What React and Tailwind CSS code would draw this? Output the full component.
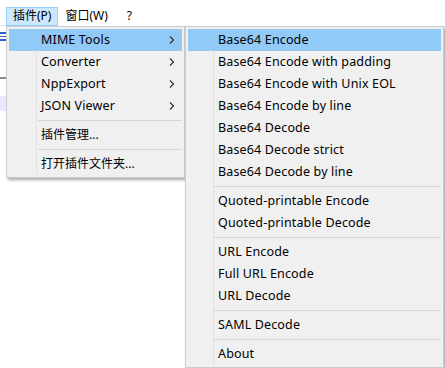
import React from "react";

const font = { fontFamily: '"Segoe UI", "Noto Sans", "Noto Sans CJK SC", sans-serif' };

const mainItems = [
  { label: "MIME Tools", sub: true, active: true },
  { label: "Converter", sub: true },
  { label: "NppExport", sub: true },
  { label: "JSON Viewer", sub: true },
  "sep",
  { label: "插件管理...", cjk: true },
  "sep",
  { label: "打开插件文件夹...", cjk: true },
];

const subItems = [
  { label: "Base64 Encode", active: true },
  { label: "Base64 Encode with padding" },
  { label: "Base64 Encode with Unix EOL" },
  { label: "Base64 Encode by line" },
  { label: "Base64 Decode" },
  { label: "Base64 Decode strict" },
  { label: "Base64 Decode by line" },
  "sep",
  { label: "Quoted-printable Encode" },
  { label: "Quoted-printable Decode" },
  "sep",
  { label: "URL Encode" },
  { label: "Full URL Encode" },
  { label: "URL Decode" },
  "sep",
  { label: "SAML Decode" },
  "sep",
  { label: "About" },
];

function Chevron() {
  return (
    <svg width="6" height="8" viewBox="0 0 6 8" className="shrink-0">
      <path d="M1 0.5 L4.5 4 L1 7.5" fill="none" stroke="#333" strokeWidth="1.2" />
    </svg>
  );
}

function Menu({ items, gutter, sepLeft, textLeft, className }) {
  return (
    <div
      className={`absolute bg-[#f0f0f0] border border-[#cccccc] p-[2px] shadow-[2px_2px_3px_rgba(0,0,0,0.35)] ${className}`}
    >
      <div className="relative">
        <div className={`absolute top-0 bottom-0 w-px bg-[#e2e2e2] ${gutter}`} />
        {items.map((it, i) =>
          it === "sep" ? (
            <div key={i} className="h-[7px] flex items-center">
              <div className={`h-px flex-1 bg-[#d7d7d7] ${sepLeft}`} />
            </div>
          ) : (
            <div
              key={i}
              className={`relative h-[22px] flex items-center pr-[7px] ${textLeft} ${
                it.active ? "bg-[#91c9f7]" : ""
              }`}
            >
              <span
                className={`flex-1 text-black whitespace-nowrap ${
                  it.cjk ? "text-[12px]" : "text-[12.5px] tracking-[0.15px]"
                }`}
              >
                {it.label}
              </span>
              {it.sub && <Chevron />}
            </div>
          )
        )}
      </div>
    </div>
  );
}

export default function App() {
  return (
    <div className="relative w-[445px] h-[368px] bg-white overflow-hidden" style={font}>
      {/* menu bar */}
      <div className="flex items-center h-[26px] pl-[6px] pt-[6px] text-[12px] text-black">
        <div className="h-[19px] px-[6px] flex items-center bg-[#cce8ff] border border-[#99d1ff]">插件(P)</div>
        <div className="px-[7px] flex items-center">窗口(W)</div>
        <div className="pl-[12px] flex items-center">?</div>
      </div>

      {/* editor remnants behind menus */}
      <div className="absolute left-0 top-[25px] w-[6px] h-px bg-[#e0e0e0]" />
      <div className="absolute left-0 top-[32px] w-[6px] flex flex-col gap-[2px]">
        <div className="h-[2px] bg-[#2f5fd0]" />
        <div className="h-[1px] bg-[#2f5fd0]" />
        <div className="h-[2px] bg-[#2f5fd0]" />
      </div>
      <div className="absolute left-0 top-[77px] w-[6px] h-[2px] bg-[#8a8a8a]" />
      <div className="absolute left-0 top-[96px] w-[6px] h-[15px] bg-[#e8e8ff]" />

      <Menu
        items={mainItems}
        gutter="left-[27px]"
        sepLeft="ml-[29px]"
        textLeft="pl-[32px]"
        className="left-[6px] top-[26px] w-[179px]"
      />
      <Menu
        items={subItems}
        gutter="left-[25px]"
        sepLeft="ml-[25px]"
        textLeft="pl-[30px]"
        className="left-[185px] top-[26px] w-[259px]"
      />
    </div>
  );
}
